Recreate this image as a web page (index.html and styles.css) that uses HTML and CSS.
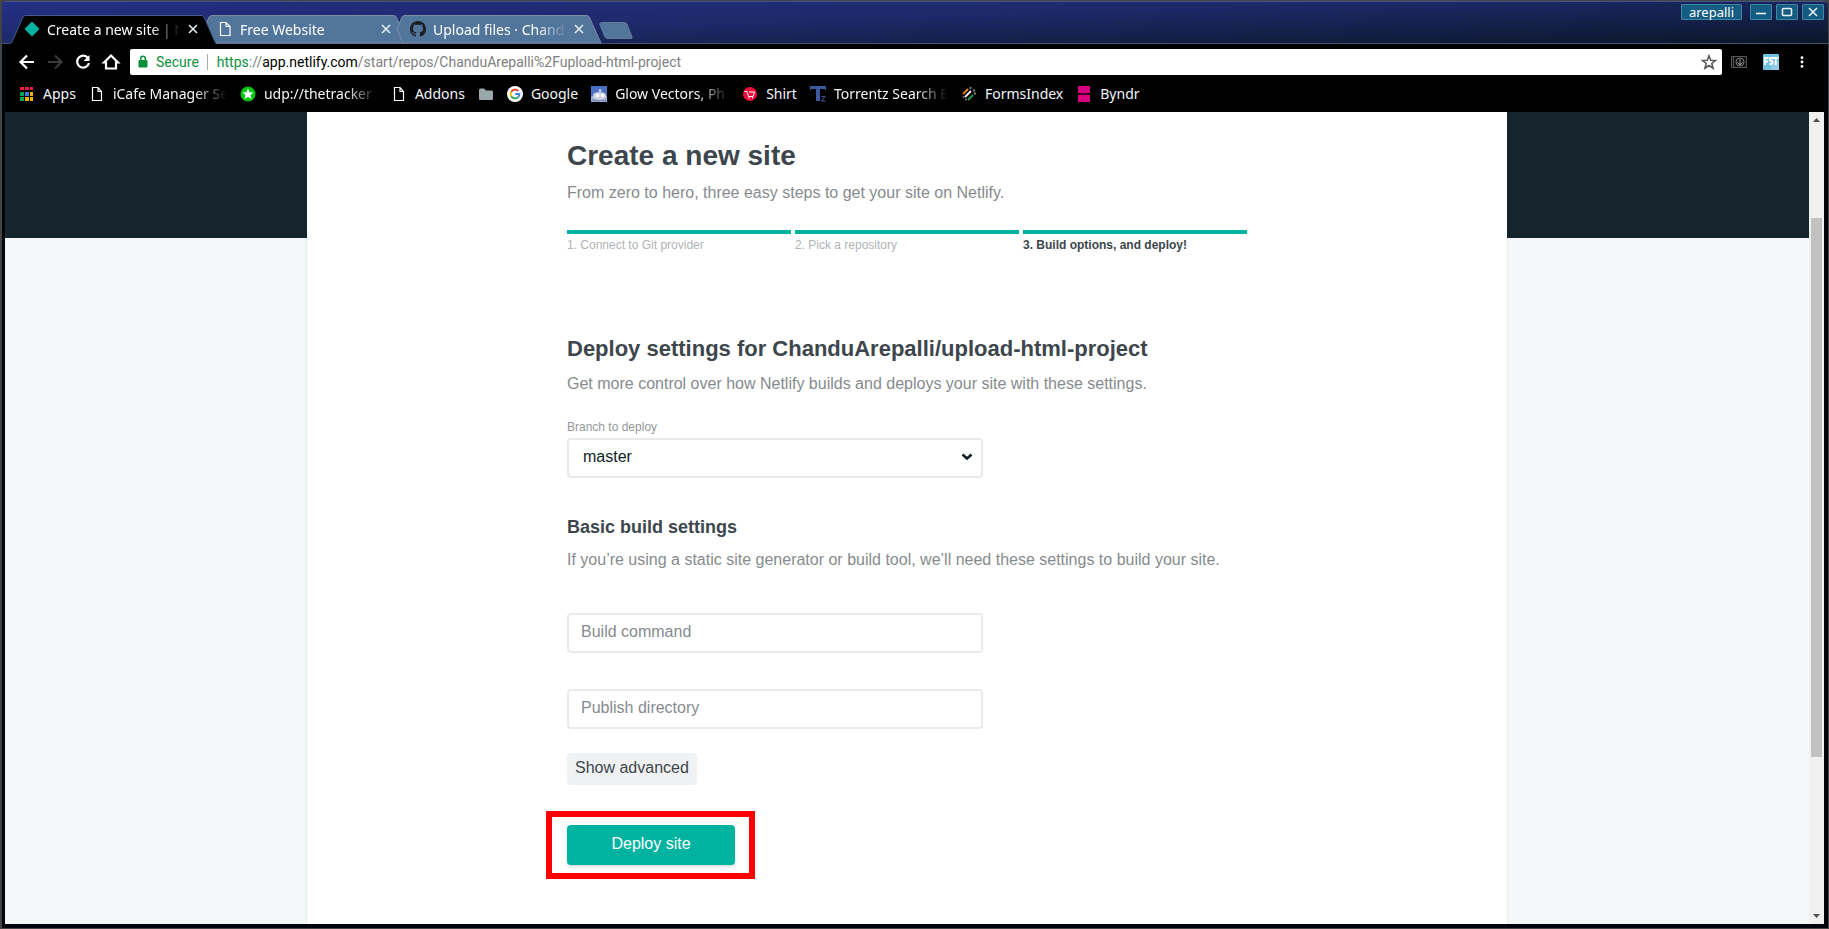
FILE: index.html
```html
<!DOCTYPE html>
<html lang="en">
<head>
<meta charset="utf-8">
<title>Create a new site | Netlify</title>
<link rel="stylesheet" href="styles.css">
</head>
<body>
<div class="window">
  <header class="titlebar">
    <nav class="tabs" aria-label="Tabs">
      <div class="tab tab-active">
        <svg class="tab-shape" viewBox="0 0 206 29"><path d="M0 28.500L2 27 13 2Q14 .5 16 .5H191Q193 .5 194 2L205 27 206 29H0Z" fill="#000"/><path d="M0 28.500 2 27 13 2Q14 .5 16 .5H191Q193 .5 194 2L205 27" fill="none" stroke="#44598c"/></svg>
        <svg class="icon" viewBox="0 0 16 16"><path d="M8 .5 15.5 8 8 15.5.5 8Z" fill="#00b3a0"/></svg>
        <span class="tab-title">Create a new site | N</span>
        <button class="tab-close" aria-label="Close tab"><svg viewBox="0 0 16 16"><path d="M4 4 12 12M12 4 4 12"/></svg></button>
      </div>
      <div class="tab">
        <svg class="tab-shape" viewBox="0 0 206 29"><path d="M7 28 1 14 6 2Q7 .5 9 .5H190Q192 .5 193 1.5L205 28Z" fill="#52759b" stroke="#7c8ca6"/></svg>
        <svg class="icon" viewBox="0 0 16 16"><path d="M3.500 1.500H9L13 5.500V14.500H3.500ZM9 1.500V5.500H13" fill="none" stroke="#fff" stroke-width="1.200"/></svg>
        <span class="tab-title">Free Website</span>
        <button class="tab-close" aria-label="Close tab"><svg viewBox="0 0 16 16"><path d="M4 4 12 12M12 4 4 12"/></svg></button>
      </div>
      <div class="tab">
        <svg class="tab-shape" viewBox="0 0 206 29"><path d="M7 28 1 14 6 2Q7 .5 9 .5H190Q192 .5 193 1.5L205 28Z" fill="#52759b" stroke="#7c8ca6"/></svg>
        <svg class="icon" viewBox="0 0 16 16"><path fill="#1b1f23" d="M8 0C3.580 0 0 3.580 0 8c0 3.540 2.290 6.530 5.470 7.590.4.070.55-.17.55-.38 0-.19-.01-.82-.01-1.490-2.010.37-2.530-.49-2.690-.94-.09-.23-.48-.94-.82-1.130-.28-.15-.68-.52-.01-.53.63-.01 1.080.58 1.230.82.72 1.210 1.870.87 2.330.66.07-.52.28-.87.51-1.070-1.780-.2-3.640-.89-3.640-3.950 0-.87.31-1.590.82-2.150-.08-.2-.36-1.020.08-2.120 0 0 .67-.21 2.200.82.64-.18 1.320-.27 2-.27s1.360.09 2 .27c1.530-1.040 2.200-.82 2.200-.82.44 1.100.16 1.920.08 2.120.51.56.82 1.270.82 2.150 0 3.070-1.870 3.750-3.650 3.950.29.25.54.73.54 1.480 0 1.070-.01 1.930-.01 2.200 0 .21.15.46.55.38A8 8 0 0 0 16 8c0-4.420-3.580-8-8-8Z"/></svg>
        <span class="tab-title">Upload files · Chand</span>
        <button class="tab-close" aria-label="Close tab"><svg viewBox="0 0 16 16"><path d="M4 4 12 12M12 4 4 12"/></svg></button>
      </div>
      <button class="new-tab" aria-label="New tab"><svg viewBox="0 0 34 18"><path d="M3 .5H25Q27 .5 28 2L33 15Q33.500 16.500 32 16.500H9Q7 16.500 6 15L.8 2.500Q.5 .5 3 .5Z" fill="#52759b" stroke="#63799a"/></svg></button>
    </nav>
    <div class="window-controls">
      <button class="user-button">arepalli</button>
      <button class="control" aria-label="Minimize"><svg viewBox="0 0 16 12"><path d="M3 7.500H13" stroke-width="2"/></svg></button>
      <button class="control" aria-label="Maximize"><svg viewBox="0 0 16 12"><rect x="3.500" y="2.500" width="9" height="7" rx="1"/></svg></button>
      <button class="control" aria-label="Close"><svg viewBox="0 0 16 12"><path d="M4 2 12 10M12 2 4 10"/></svg></button>
    </div>
  </header>

  <div class="toolbar">
    <div class="nav-buttons">
      <button class="nav-button" aria-label="Back"><svg viewBox="0 0 20 20"><path d="M17 10H4M10 3.500 3.500 10 10 16.500"/></svg></button>
      <button class="nav-button nav-disabled" aria-label="Forward" disabled><svg viewBox="0 0 20 20"><path d="M3 10H16M10 3.500 16.500 10 10 16.500"/></svg></button>
      <button class="nav-button" aria-label="Reload"><svg viewBox="0 0 20 20"><path d="M15 6A6 6 0 1 0 16 11"/><path d="M16.500 3V9H10.500Z" fill="#fff" stroke="none"/></svg></button>
      <button class="nav-button" aria-label="Home"><svg viewBox="0 0 20 20"><path d="M3 10.500 10 3.500 17 10.500H15V16.500H5V10.500Z"/></svg></button>
    </div>
    <div class="omnibox">
      <svg class="lock" viewBox="0 0 10 14"><path d="M1 5.500H9V12H1Z" fill="#0a8f3c" stroke="#0a8f3c"/><path d="M2.700 6V3.500a2.300 2.300 0 0 1 4.600 0V6" fill="none" stroke="#0a8f3c" stroke-width="1.500"/></svg>
      <span class="secure">Secure</span>
      <span class="url"><span class="scheme">https</span>://<span class="host">app.netlify.com</span>/start/repos/ChanduArepalli%2Fupload-html-project</span>
      <button class="star" aria-label="Bookmark this page"><svg viewBox="0 0 16 16"><path d="M8 1.700 9.700 6.200 14.600 6.400 10.800 9.500 12.100 14.200 8 11.500 3.900 14.200 5.200 9.500 1.400 6.400 6.300 6.200Z" fill="none" stroke="#555" stroke-width="1.500"/></svg></button>
    </div>
    <div class="extensions">
      <svg class="ext" viewBox="0 0 16 16"><path d="M.5 2.500H15.500V13.500H.5ZM2.500 2.500V13.500" fill="#111" stroke="#555"/><circle cx="9" cy="8" r="4" fill="none" stroke="#777"/><path d="M9 5V11M6.500 8.500 9 11 11.500 8.500" fill="none" stroke="#999"/></svg>
      <svg class="ext" viewBox="0 0 16 16"><rect width="16" height="16" rx="1" fill="#6fc0e2"/><path d="M8 8H16V16H8Z" fill="#91cee6"/><path d="M2 11V4H5.500M2 7.500H5M10 4H7V6.500Q10 6.500 9.500 8.500 9 10.500 6.500 10M10 4H15.500M12.800 4V11" fill="none" stroke="#fff" stroke-width="1.800"/></svg>
      <button class="menu-button" aria-label="Menu"><svg viewBox="0 0 16 16"><circle cx="8" cy="3" r="1.600"/><circle cx="8" cy="8" r="1.600"/><circle cx="8" cy="13" r="1.600"/></svg></button>
    </div>
  </div>

  <nav class="bookmarks" aria-label="Bookmarks">
    <a class="bookmark" href="#"><svg class="icon" viewBox="0 0 16 16"><path fill="#ed1c3c" d="M1 1h4v3H1zM6 1h4v3H6zM11 1h3v3h-3z"/><path fill="#00a651" d="M1 6h4v4H1zM1 11h4v4H1z"/><path fill="#3b78e7" d="M6 6h4v4H6z"/><path fill="#f4b400" d="M11 6h3v4h-3zM6 11h4v4H6zM11 11h3v4h-3z"/><path d="M5.500 0V16M10.500 0V16" stroke="#000"/></svg><span>Apps</span></a>
    <a class="bookmark" href="#"><svg class="icon" viewBox="0 0 16 16"><path d="M3.500 1.500H9L12.500 5.500V14.500H3.500ZM9 1.500V5.500H12.500" fill="none" stroke="#fff" stroke-width="1.200"/></svg><span class="clipped">iCafe Manager Se</span></a>
    <a class="bookmark" href="#"><svg class="icon" viewBox="0 0 16 16"><circle cx="8" cy="8" r="7.500" fill="#00c414"/><path d="M8 2.500 9.600 6.200 13.500 6.500 10.500 9 11.500 13 8 10.900 4.500 13 5.500 9 2.500 6.500 6.400 6.200Z" fill="#fff"/></svg><span class="clipped">udp://thetracker</span></a>
    <a class="bookmark" href="#"><svg class="icon" viewBox="0 0 16 16"><path d="M3.500 1.500H9L12.500 5.500V14.500H3.500ZM9 1.500V5.500H12.500" fill="none" stroke="#fff" stroke-width="1.200"/></svg><span>Addons</span></a>
    <a class="bookmark" href="#" aria-label="Folder"><svg class="icon" viewBox="0 0 16 16"><path d="M1 4Q1 2.500 2.500 2.500H6L8 4.500H14Q15 4.500 15 6V12.500Q15 14 14 14H2Q1 14 1 12.500Z" fill="#9aa8ac"/></svg></a>
    <a class="bookmark" href="#"><svg class="icon" viewBox="0 0 16 16"><circle cx="8" cy="8" r="8" fill="#fff"/><g fill="none" stroke-width="2"><path d="M4.200 5.800A4.400 4.400 0 0 1 11.200 5" stroke="#ea4335"/><path d="M4.200 5.800A4.400 4.400 0 0 0 4.200 10.200" stroke="#fbbc05"/><path d="M4.200 10.200A4.400 4.400 0 0 0 11 11.200" stroke="#34a853"/><path d="M11 11.200A4.400 4.400 0 0 0 12.400 8H8.200" stroke="#4285f4"/></g></svg><span>Google</span></a>
    <a class="bookmark" href="#"><svg class="icon" viewBox="0 0 16 16"><path fill="#4a70c4" d="M0 0h16v16H0z"/><path fill="#93a9dc" d="M0 10h16v6H0z"/><path d="M2 9.500Q2 6 8.500 6T15 9.500V12Q8 16 2 12Z" fill="#cbd1dd"/><circle cx="9" cy="4.500" r="1.300" fill="#dfe4ee"/><circle cx="6.500" cy="9.500" r="1.700" fill="#fff"/><circle cx="11.500" cy="9.500" r="1.700" fill="#fff"/><path d="M1 14.500H15" stroke="#7f89a2"/></svg><span class="clipped">Glow Vectors, Ph</span></a>
    <a class="bookmark" href="#"><svg class="icon" viewBox="0 0 16 16"><circle cx="8" cy="8" r="7" fill="#ee0a3a"/><path d="M2.500 5.500H5L6.500 10.500H11L12.500 6H7" fill="none" stroke="#fff"/><path d="M7 11V12.500M10.500 11V12.500" stroke="#fff"/></svg><span>Shirt</span></a>
    <a class="bookmark" href="#"><svg class="icon" viewBox="0 0 16 16"><path fill="#3d5a9e" d="M0 0h16v4h-1V3h-5v12H6V3H1v1H0z"/><path d="M11.500 10.500H15L11.500 15H15.500" fill="none" stroke="#3d5a9e"/></svg><span class="clipped">Torrentz Search E</span></a>
    <a class="bookmark" href="#"><svg class="icon" viewBox="0 0 16 16"><g fill="none" stroke-width="2"><path d="M2 8 7 3" stroke="#e8801c"/><path d="M4 11 10 5" stroke="#eee"/><path d="M7 14 12 9" stroke="#1d9c48"/></g><g fill="#777"><circle cx="9.500" cy="2" r="1.200"/><circle cx="13" cy="4.500" r="1.200"/><circle cx="14" cy="7.500" r="1.200"/><circle cx="2.500" cy="11" r="1"/><circle cx="5" cy="13.500" r="1"/></g></svg><span>FormsIndex</span></a>
    <a class="bookmark" href="#"><svg class="icon" viewBox="0 0 16 16"><path fill="#d8007f" d="M2 0h12v7H2zM2 9h12v7H2z"/><path d="M4 8H12" stroke="#8a0052"/></svg><span>Byndr</span></a>
  </nav>

  <div class="viewport">
    <div class="page">
      <main class="card">
        <div class="column">
          <h1>Create a new site</h1>
          <p class="lead">From zero to hero, three easy steps to get your site on Netlify.</p>
          <ol class="steps">
            <li>1. Connect to Git provider</li>
            <li>2. Pick a repository</li>
            <li class="current">3. Build options, and deploy!</li>
          </ol>
          <form class="form">
            <h2>Deploy settings for ChanduArepalli/upload-html-project</h2>
            <p class="lead">Get more control over how Netlify builds and deploys your site with these settings.</p>
            <label class="field-label" for="branch">Branch to deploy</label>
            <div class="select-wrap">
              <select id="branch" class="field select"><option>master</option></select>
              <svg class="chevron" viewBox="0 0 12 8"><path d="M1.500 1.500 6 5.500 10.500 1.500" fill="none" stroke="#0e1e25" stroke-width="2.600"/></svg>
            </div>
            <h3>Basic build settings</h3>
            <p class="lead">If you’re using a static site generator or build tool, we’ll need these settings to build your site.</p>
            <div class="inputs">
              <input class="field" type="text" placeholder="Build command" aria-label="Build command">
              <input class="field" type="text" placeholder="Publish directory" aria-label="Publish directory">
            </div>
            <button class="advanced" type="button">Show advanced</button>
            <div class="deploy-wrap">
              <button class="deploy" type="submit">Deploy site</button>
              <div class="highlight"></div>
            </div>
          </form>
        </div>
      </main>
    </div>
    <div class="scrollbar">
      <svg viewBox="0 0 15 17"><path d="M4 10 7.500 6 11 10Z" fill="#505050"/></svg>
      <div class="thumb"></div>
      <svg class="arrow-down" viewBox="0 0 15 17"><path d="M4 7H11L7.500 11Z" fill="#505050"/></svg>
    </div>
  </div>
</div>
</body>
</html>
```
FILE: styles.css
```css
* { box-sizing: border-box; }

body {
  margin: 0;
  background: #444;
  font-family: "Liberation Sans", Arial, sans-serif;
}

button {
  padding: 0;
  border: 0;
  background: none;
  font: inherit;
  color: inherit;
}

svg { display: block; }

.window {
  display: flex;
  flex-direction: column;
  min-height: 100vh;
  padding: 0 4px 4px 3px;
  border: 1px solid #444;
  border-left-width: 2px;
  border-radius: 5px 5px 0 0;
  background: #00060a;
}

/* Title bar and tabs */
.titlebar,
.toolbar,
.bookmarks {
  font-family: "Noto Sans", "Open Sans", sans-serif;
}

.titlebar {
  display: flex;
  justify-content: space-between;
  height: 43px;
  margin: 0 -4px 0 -3px;
  padding: 0 4px 0 14px;
  border-top: 1px solid #40568c;
  border-bottom: 1px solid #46536f;
  border-radius: 4px 4px 0 0;
  background: linear-gradient(178deg, #232f83, #1d2968 45%, #0b1729);
  color: #fff;
}

.tabs {
  display: flex;
  align-items: flex-end;
}

.tab {
  position: relative;
  display: flex;
  align-items: center;
  width: 193px;
  height: 28px;
  padding: 0 8px;
  font-size: 14px;
}

.tab-active { z-index: 1; }

.tab-shape {
  position: absolute;
  left: -6px;
  top: 0;
  width: 206px;
  height: 29px;
}

.icon {
  position: relative;
  flex: none;
  width: 16px;
  height: 16px;
}

.tab-title {
  position: relative;
  flex: 1;
  min-width: 0;
  margin-left: 7px;
  white-space: nowrap;
  mask-image: linear-gradient(to right, #000 calc(100% - 30px), transparent);
}

.tab-close {
  position: relative;
  width: 16px;
  height: 16px;
  margin-left: 4px;
}

.tab-close path {
  fill: none;
  stroke: #e4ecf2;
  stroke-width: 1.6;
}

.new-tab {
  width: 34px;
  height: 18px;
  margin: 0 0 3px 4px;
}

.window-controls {
  display: flex;
  gap: 4px;
  padding-top: 2px;
}

.user-button,
.control {
  width: 22px;
  height: 16px;
  border: 1px solid #3f86a8;
  border-radius: 1px;
  background: #155c82;
}

.user-button {
  width: 61px;
  margin-right: 4px;
  font-size: 13px;
  line-height: 12px;
}

.control svg { margin: auto; width: 16px; height: 12px; }

.control svg * {
  fill: none;
  stroke: #e8f1f5;
  stroke-width: 1.6;
}

/* Toolbar */
.toolbar {
  display: flex;
  align-items: center;
  padding: 5px 15px 0 12px;
  background: #000;
}

.nav-buttons {
  display: flex;
  gap: 8px;
  margin-right: 9px;
}

.nav-button,
.nav-button svg { width: 20px; height: 20px; }

.nav-button path {
  fill: none;
  stroke: #fff;
  stroke-width: 2.2;
}

.nav-button path + path { fill: #fff; stroke: none; }
.nav-disabled path { stroke: #3a3a3a; }

.omnibox {
  display: flex;
  flex: 1;
  align-items: center;
  height: 26px;
  padding: 0 5px 0 8px;
  border-radius: 2px;
  background: #fff;
  font-family: Roboto, "Noto Sans", sans-serif;
  font-size: 14px;
  color: #808080;
}

.lock { width: 10px; height: 14px; }

.secure {
  margin-left: 8px;
  padding-right: 8px;
  border-right: 1px solid #aaa;
  line-height: 16px;
  color: #0a8f3c;
}

.url { flex: 1; margin-left: 9px; white-space: nowrap; }
.scheme { color: #0a8f3c; }
.host { color: #000; }

.star svg { width: 16px; height: 16px; }

.extensions {
  display: flex;
  gap: 16px;
  align-items: center;
  margin-left: 9px;
}

.ext { width: 16px; height: 16px; }

.menu-button svg { width: 14px; height: 14px; fill: #fff; }

/* Bookmarks */
.bookmarks {
  display: flex;
  gap: 13px;
  align-items: center;
  height: 37px;
  padding: 0 14px;
  background: #000;
  font-size: 14px;
}

.bookmark {
  display: flex;
  gap: 8px;
  align-items: center;
  color: #f2f6f8;
  text-decoration: none;
  white-space: nowrap;
}

.clipped {
  width: 114px;
  mask-image: linear-gradient(to right, #000 calc(100% - 32px), transparent);
}

/* Page */
.viewport {
  display: flex;
  flex: 1;
}

.page {
  flex: 1;
  background: linear-gradient(#16252b 126px, #f3f7f8 126px);
}

.card {
  width: 100%;
  max-width: 1200px;
  height: 100%;
  margin: 0 auto;
  padding: 28px 20px 40px;
  background: #fff;
  box-shadow: 0 0 2px rgba(14, 30, 37, .15);
}

.column { max-width: 680px; margin: 0 auto; }

h1, h2, h3 { margin: 0; color: #3c464c; }
h1 { font-size: 28px; line-height: 32px; }
h2 { font-size: 22px; line-height: 28px; }
h3 { margin-top: 37px; font-size: 18px; line-height: 24px; }

.lead {
  margin: 9px 0 0;
  font-size: 16px;
  line-height: 24px;
  color: #868b8e;
}

.steps {
  display: grid;
  grid-template-columns: repeat(3, 1fr);
  gap: 4px;
  margin: 25px 0 0;
  padding: 0;
  list-style: none;
  font-size: 12px;
  line-height: 16px;
  color: #afb3b5;
}

.steps li {
  padding-top: 3px;
  border-top: 4px solid #00b3a0;
}

.steps .current { font-weight: bold; color: #3c464c; }

.form { padding-top: 82px; }

.field-label {
  display: block;
  margin: 23px 0 3px;
  font-size: 12px;
  line-height: 16px;
  color: #93989b;
}

.select-wrap { position: relative; max-width: 416px; }

.field {
  display: block;
  width: 100%;
  height: 40px;
  padding: 0 12px 2px;
  border: 2px solid #e9ebeb;
  border-radius: 4px;
  background: #fff;
  font: 16px "Liberation Sans", Arial, sans-serif;
  color: #0e1e25;
}

.field::placeholder { color: #868b8e; opacity: 1; }

.select { padding: 0 14px 4px; appearance: none; }

.chevron {
  position: absolute;
  top: 15px;
  right: 10px;
  width: 12px;
  height: 8px;
  pointer-events: none;
}

.inputs {
  display: grid;
  gap: 36px;
  max-width: 416px;
  margin: 41px 0 24px;
}

.advanced {
  height: 32px;
  padding: 0 8px 2px;
  border-radius: 4px;
  background: #f0f1f3;
  color: #3c464c;
}

.deploy-wrap {
  position: relative;
  width: 168px;
  margin-top: 40px;
}

.deploy {
  width: 100%;
  height: 40px;
  padding-bottom: 3px;
  border-radius: 4px;
  background: #00b3a0;
  box-shadow: 0 2px 3px rgba(14, 30, 37, .15);
  color: #fff;
}

.highlight {
  position: absolute;
  inset: -14px -20px -14px -21px;
  border: 6px solid #f00;
  pointer-events: none;
}

/* Scrollbar */
.scrollbar {
  display: grid;
  grid-template-rows: 17px 89fr 539fr 150fr 17px;
  width: 15px;
  background: #f0f0f0;
}

.thumb { grid-row: 3; margin: 0 2px; background: #c1c1c1; }
.arrow-down { grid-row: 5; }
```
